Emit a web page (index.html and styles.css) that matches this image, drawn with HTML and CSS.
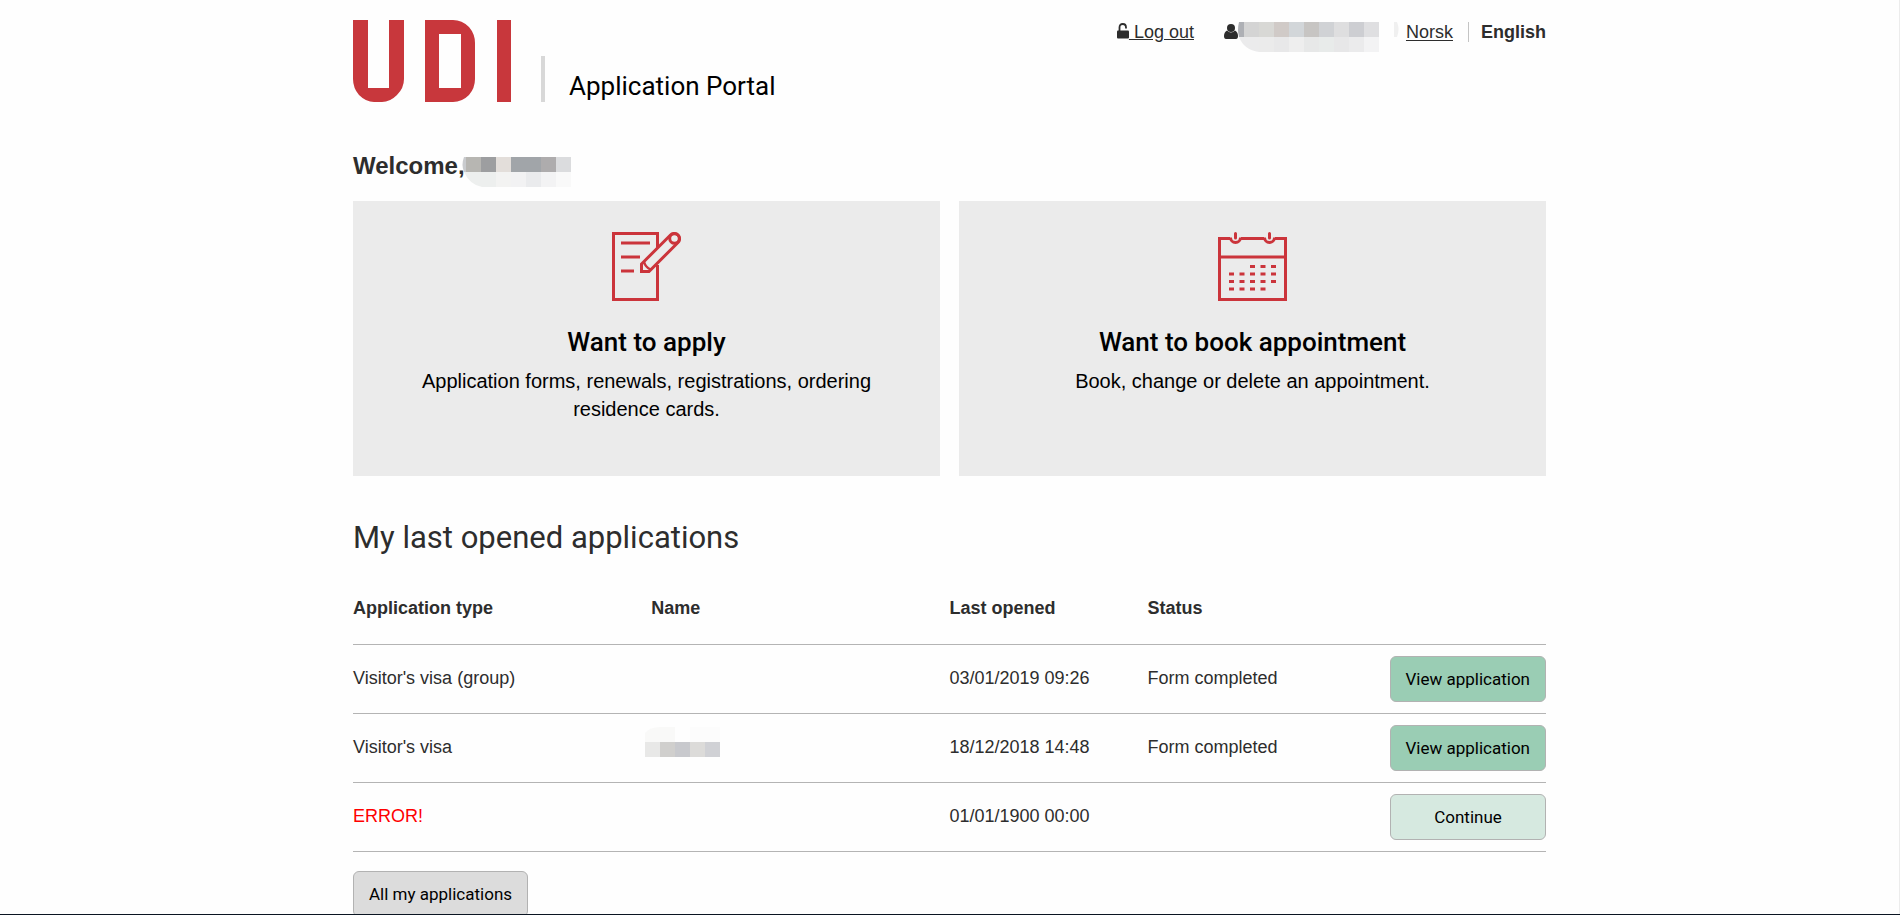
FILE: index.html
```html
<!DOCTYPE html>
<html lang="en">
<head>
<meta charset="utf-8">
<meta name="viewport" content="width=device-width, initial-scale=1">
<title>UDI Application Portal</title>
<link rel="stylesheet" href="styles.css">
</head>
<body>
<div class="page">
  <header class="header">
    <div class="brand">
      <a class="logo" href="#" aria-label="UDI">
        <svg width="158" height="82" viewBox="0 0 158 82" fill="#c8373c">
          <path d="M0 0H15V68H36V0H51V59Q51 68 44 75Q37 82 29 82H21Q13 82 6 75Q0 68 0 59Z"/>
          <path fill-rule="evenodd" d="M72 0H100Q109 0 116 7Q122 14 122 23V59Q122 68 116 75Q109 82 100 82H72ZM86 14V68H108V14Z"/>
          <path d="M144 0H158V82H144Z"/>
        </svg>
      </a>
      <span class="brand-divider"></span>
      <span class="brand-title">Application Portal</span>
    </div>
    <nav class="tools">
      <a class="tool logout" href="#"><svg class="lock" width="12" height="16" viewBox="0 0 12 16"><path d="M2.500 8V4.500Q2.500 1 5.800 1Q9 1 9 4.500V5.500" fill="none" stroke="#2d2d2d" stroke-width="1.800"/><rect x="0" y="7.500" width="12" height="8" rx="1" fill="#2d2d2d"/></svg><span>&nbsp;Log out</span></a>
      <a class="tool user" href="#" aria-label="User profile"><svg width="14" height="15" viewBox="0 0 14 15" fill="#2d2d2d"><circle cx="7" cy="4" r="4"/><path d="M3 6.500Q7 10.500 11 6.500Q14 8 14 12Q14 15 12 15H2Q0 15 0 12Q0 8 3 6.500Z"/></svg><svg class="mask" width="161" height="30" viewBox="0 0 161 30">
        <path d="M6 0H1Q-1 8 1 15H6Z" fill="#aeb0b5"/>
        <path d="M1 15H21V30Q6 28 1 15Z" fill="#ebebec"/>
        <path fill="#d4d4d4" d="M6 0h15v15H6z"/><path fill="#d8d8d5" d="M21 0h15v15H21z"/><path fill="#d0cac7" d="M36 0h15v15H36z"/><path fill="#d2d6d9" d="M51 0h15v15H51z"/><path fill="#c7c5c3" d="M66 0h15v15H66z"/><path fill="#d0d2d5" d="M81 0h15v15H81z"/><path fill="#dededf" d="M96 0h15v15H96z"/><path fill="#cdced2" d="M111 0h15v15h-15z"/><path fill="#dfdfe1" d="M126 0h15v15h-15z"/>
        <path fill="#ebebeb" d="M21 15h15v15H21z"/><path fill="#e8e8e9" d="M36 15h15v15H36z"/><path fill="#eee" d="M51 15h15v15H51z"/><path fill="#e7e8e8" d="M66 15h15v15H66z"/><path fill="#e8ebea" d="M81 15h15v15H81z"/><path fill="#e7e7e8" d="M96 15h15v15H96z"/><path fill="#ebebec" d="M111 15h15v15h-15z"/><path fill="#f3f3f4" d="M126 15h15v15h-15z"/>
        <path fill="#f0f0f0" d="M156 0h3Q162 7 159 15h-3z"/>
      </svg></a>
      <a class="tool lang" href="#">Norsk</a>
      <strong class="lang-current">English</strong>
    </nav>
  </header>

  <main>
    <h1 class="welcome">Welcome,<svg width="109" height="30" viewBox="0 0 109 30">
      <path fill="#c9cbce" d="M4 0H2Q-1 8 2 15H4Z"/><path fill="#b7b6b2" d="M4 0h15v15H4z"/><path fill="#9d9ea0" d="M19 0h15v15H19z"/><path fill="#e3deda" d="M34 0h15v15H34z"/><path fill="#a1a5a9" d="M49 0h30v15H49z"/><path fill="#aeacad" d="M79 0h15v15H79z"/><path fill="#dbdcde" d="M94 0h15v15H94z"/>
      <path fill="#edefee" d="M2 15H34V30H20Q8 28 2 15Z"/><path fill="#f3f3f2" d="M34 15h15v15H34z"/><path fill="#f2f2f3" d="M49 15h15v15H49z"/><path fill="#eaebed" d="M64 15h15v15H64z"/><path fill="#f3f3f4" d="M79 15h15v15H79z"/><path fill="#f9f9f9" d="M94 15h15v15H94z"/>
    </svg></h1>

    <div class="cards">
      <a class="card" href="#">
        <svg width="69" height="69" viewBox="0 0 69 69" fill="none" stroke="#cb343b" stroke-width="3">
          <path d="M45.500 16V1.500H1.500V67.500H45.500V33"/>
          <path d="M9 11H38M9 25H28M9 39H22"/>
          <path d="M29.500 32L58.500 3A5 5 0 0 1 66 10.500L37 39.500H29.500Z"/>
          <circle cx="62.500" cy="6.500" r="4.800"/>
          <path d="M32 30Q33.500 35 38.500 37.500" stroke-width="2.500"/>
        </svg>
        <h2 class="card-title">Want to apply</h2>
        <p class="card-text">Application forms, renewals, registrations, ordering residence cards.</p>
      </a>
      <a class="card" href="#">
        <svg width="69" height="69" viewBox="0 0 69 69" fill="none" stroke="#cb343b" stroke-width="3">
          <path d="M12 6.500H1.500V67.500H67.500V6.500H57M23 6.500H46M1.500 25H67.500"/>
          <path d="M12.500 5.500A5 5 0 0 0 22.500 5.500M46.500 5.500A5 5 0 0 0 56.500 5.500"/>
          <path d="M17.500 1.500V6M51.500 1.500V6" stroke-linecap="round"/>
          <path d="M32 34.500h5m5.500 0h5m5.500 0h5M11 42h5m5.500 0h5m5.500 0h5m5.500 0h5m5.500 0h5M11 49.500h5m5.500 0h5m5.500 0h5m5.500 0h5m5.500 0h5M11 57h5m5.500 0h5m5.500 0h5m5.500 0h5"/>
        </svg>
        <h2 class="card-title">Want to book appointment</h2>
        <p class="card-text">Book, change or delete an appointment.</p>
      </a>
    </div>

    <h2 class="section-title">My last opened applications</h2>
    <table class="apps">
      <colgroup><col class="col-wide"><col class="col-wide"><col class="col-date"><col class="col-narrow"><col></colgroup>
      <thead>
        <tr><th>Application type</th><th>Name</th><th>Last opened</th><th>Status</th><td></td></tr>
      </thead>
      <tbody>
        <tr><td>Visitor's visa (group)</td><td></td><td>03/01/2019 09:26</td><td>Form completed</td><td class="action"><button class="btn btn-view" type="button">View application</button></td></tr>
        <tr><td>Visitor's visa</td><td><svg class="name-mask" width="75" height="30" viewBox="0 0 75 30">
          <path fill="#f9f9f8" d="M0 6Q5 0 15 0H30V15H0Z"/><path fill="#fcfcfc" d="M45 0h30v15H45z"/><path fill="#e8e8e7" d="M0 15h15v15H0z"/><path fill="#d0cfcd" d="M15 15h15v15H15z"/><path fill="#c8c9cd" d="M30 15h15v15H30z"/><path fill="#dcdbd9" d="M45 15h15v15H45z"/><path fill="#d0d1d5" d="M60 15h15v15H60z"/>
        </svg></td><td>18/12/2018 14:48</td><td>Form completed</td><td class="action"><button class="btn btn-view" type="button">View application</button></td></tr>
        <tr><td class="error">ERROR!</td><td></td><td>01/01/1900 00:00</td><td></td><td class="action"><button class="btn btn-continue" type="button">Continue</button></td></tr>
      </tbody>
    </table>
    <button class="btn btn-all" type="button">All my applications</button>
  </main>
</div>
</body>
</html>
```
FILE: styles.css
```css
* { box-sizing: border-box; }

body {
  margin: 0;
  height: 100vh;
  overflow: hidden;
  border-right: 1px solid #ececec;
  background: #fefefe;
  color: #2d2d2d;
  font-family: "Liberation Sans", Arial, sans-serif;
  font-size: 18px;
  line-height: 24px;
}

body::after {
  content: "";
  position: fixed;
  left: 0;
  right: 0;
  bottom: 0;
  height: 1px;
  background: #0b1522;
}

svg { display: block; flex: none; }
a { color: inherit; }

.page { max-width: 1193px; margin: 0 auto; }

.header {
  display: flex;
  justify-content: space-between;
  align-items: flex-start;
  padding-top: 20px;
}

.brand { display: flex; align-items: flex-end; }
.brand-divider { width: 4px; height: 46px; margin: 0 24px 0 30px; background: #d8d8d8; }
.brand-title {
  color: #000;
  font-family: Roboto, sans-serif;
  font-size: 26px;
  line-height: 32px;
}

.tools { display: flex; align-items: flex-start; }
.tool { display: flex; }
.logout { margin-right: 30px; text-decoration: none; }
.logout span { text-decoration: underline; }
.lock { margin-top: 3px; }
.user { height: 24px; margin-right: 7px; }
.user svg { margin-top: 4px; }
.user .mask { margin-top: 2px; }
.lang { text-underline-offset: 2px; }
.lang-current {
  margin-left: 15px;
  padding-left: 13px;
  background: linear-gradient(#c4c4c4, #c4c4c4) 0 2px / 1px 20px no-repeat;
}

.welcome {
  display: flex;
  align-items: flex-start;
  margin: 49px 0 14px;
  font-size: 24px;
  line-height: 30px;
}
.welcome svg { margin: 6px 0 0 -3px; }

.cards { display: grid; grid-template-columns: 1fr 1fr; gap: 19px; }
.card {
  display: flex;
  flex-direction: column;
  align-items: center;
  min-height: 275px;
  padding: 31px 64px 50px;
  background: #ebebeb;
  color: #000;
  text-align: center;
  text-decoration: none;
}
.card-title {
  margin: 23px 0 7px;
  font-family: Roboto, sans-serif;
  font-size: 26px;
  font-weight: 500;
  line-height: 36px;
}
.card-text { margin: 0; font-size: 20px; line-height: 28px; }

.section-title {
  margin: 42px 0 30px;
  font-family: Roboto, sans-serif;
  font-size: 31px;
  font-weight: 400;
  line-height: 40px;
}

.apps {
  width: 100%;
  table-layout: fixed;
  border-collapse: separate;
  border-spacing: 0;
}
.col-wide { width: 25%; }
.col-date { width: 16.6%; }
.col-narrow { width: 16.6%; }
.apps tr { height: 69px; }
.apps th, .apps td {
  padding: 0 0 2px;
  border-bottom: 1px solid #b4b4b4;
  text-align: left;
  vertical-align: middle;
}
.apps thead tr { height: 57px; }
.apps thead th { padding-bottom: 16px; }
.apps .action { padding: 0; text-align: right; }
.name-mask { margin: -10px 0 0 -6px; }
.apps .error { color: #f00; }

.btn {
  min-width: 156px;
  height: 46px;
  padding: 0 15px;
  border: 1px solid #b2b2b2;
  border-radius: 6px;
  color: #000;
  font-family: Roboto, sans-serif;
  font-size: 17px;
  line-height: 24px;
  vertical-align: middle;
}
.btn-view { background: #9acdb4; }
.btn-continue { background: #d6e9e0; }
.btn-all { margin-top: 19px; background: #dcdcdc; }
```
